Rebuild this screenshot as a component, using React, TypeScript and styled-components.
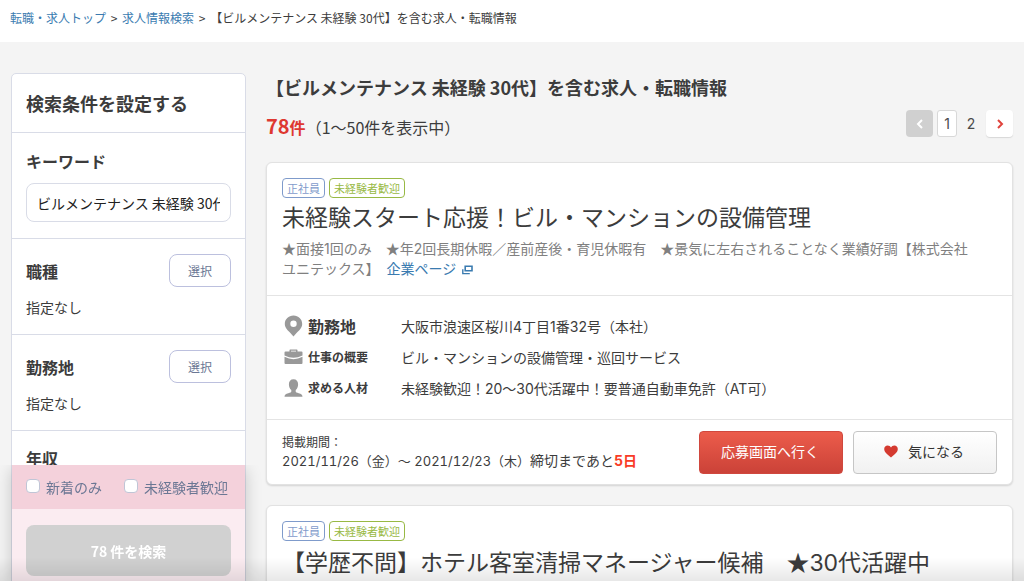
import React, { useState } from "react";
import styled, { createGlobalStyle } from "styled-components";

const sans = `"Noto Sans CJK JP", "Noto Sans", sans-serif`;
const cardSans = `"Inter", "Noto Sans CJK JP", sans-serif`;

const GlobalStyle = createGlobalStyle`
  *, *::before, *::after { box-sizing: border-box; }
  body { margin: 0; color: #3c3c3c; background: #f4f4f4; font-family: ${sans}; }
  h1, h2, h3, p, dl, dd, dt, ul, ol { margin: 0; padding: 0; }
  ul, ol { list-style: none; }
  button, input { font-family: inherit; }
  button { cursor: pointer; }
`;

const Page = styled.div`
  height: 100vh;
  overflow-y: auto;
  scrollbar-width: none;
`;

const Breadcrumb = styled.nav`
  height: 42px;
  padding: 9px 10px 0;
  background: #fff;
  font-size: 12px;
  line-height: 18px;
  white-space: nowrap;
`;

const Separator = styled.span`
  margin: 0 2px;
`;

const Link = styled.a`
  color: #3a7bb0;
  text-decoration: none;

  svg {
    margin-left: 2px;
    vertical-align: -1px;
  }
`;

const Columns = styled.div`
  display: flex;
  align-items: flex-start;
  gap: 20px;
  padding: 31px 11px 0;
`;

const Sidebar = styled.form`
  flex: 0 0 235px;
  background: #fff;
  border: 1px solid #d9dce7;
  border-radius: 5px;
`;

const SideTitle = styled.h2`
  height: 58px;
  padding: 0 14px;
  font-size: 18px;
  line-height: 58px;
`;

const Section = styled.section<{ $height: number }>`
  height: ${(p) => p.$height}px;
  padding: 15px 14px 0;
  border-top: 1px solid #d9dce7;
`;

const SectionHead = styled.div`
  display: flex;
  align-items: center;
  justify-content: space-between;
`;

const SectionTitle = styled.h3`
  font-size: 16px;
  line-height: 24px;
`;

const KeywordLabel = styled.label`
  display: block;
  font-size: 16px;
  font-weight: bold;
  line-height: 26px;
`;

const KeywordInput = styled.input`
  width: 100%;
  height: 39px;
  margin-top: 9px;
  padding: 0 10px;
  border: 1px solid #d9dce7;
  border-radius: 8px;
  background: #fff;
  color: #222;
  font-size: 14px;
`;

const SelectButton = styled.button`
  width: 62px;
  height: 33px;
  padding: 0 0 1px;
  border: 1px solid #bcc0de;
  border-radius: 8px;
  background: #fff;
  color: #6b7794;
  font-size: 12px;
`;

const Chosen = styled.p`
  margin-top: 9px;
  font-size: 14px;
  line-height: 22px;
`;

const SideFooter = styled.div`
  position: sticky;
  bottom: 0;
  background: #fbecf1;
  box-shadow: 0 4px 16px rgba(0, 0, 0, 0.2);
  clip-path: inset(0 -20px 0 -20px);
`;

const Checks = styled.div`
  display: flex;
  gap: 22px;
  height: 44px;
  padding: 0 14px;
  background: #f4d1db;
`;

const Check = styled.label`
  display: flex;
  align-items: center;
  gap: 6px;
  color: #6b7794;
  font-size: 14px;
  white-space: nowrap;

  input {
    appearance: none;
    flex: none;
    width: 14px;
    height: 14px;
    margin: 0 0 3px;
    border: 1px solid #c0c5d6;
    border-radius: 4px;
    background: #fff;
  }
  input:checked { background: #6b7794; }
`;

const SearchArea = styled.div`
  height: 72px;
  padding: 16px 14px 0;
`;

const SearchButton = styled.button`
  width: 100%;
  height: 51px;
  border: 0;
  border-radius: 8px;
  background: #d1d1d1;
  color: #fff;
  font-size: 14px;
  font-weight: bold;
`;

const Main = styled.main`
  flex: 1;
  min-width: 0;
`;

const Heading = styled.h1`
  font-size: 18px;
  line-height: 28px;
`;

const ResultBar = styled.div`
  display: flex;
  align-items: flex-start;
  justify-content: space-between;
  height: 61px;
`;

const Count = styled.p`
  padding-top: 10px;
  font-size: 16px;
  line-height: 30px;

  strong { color: #de3830; }
`;

const CountNumber = styled.span`
  font-size: 20px;
`;

const Pager = styled.nav`
  display: flex;
  align-items: center;
  gap: 4px;
  padding-top: 9px;
  font-family: ${cardSans};
  font-size: 14px;
`;

const PagerButton = styled.button<{ $muted?: boolean }>`
  display: flex;
  align-items: center;
  justify-content: center;
  width: 27px;
  height: 27px;
  padding: 0;
  border: 0;
  border-radius: 4px;
  background: ${(p) => (p.$muted ? "#d0d0d0" : "#fff")};
  color: ${(p) => (p.$muted ? "#fff" : "#e0433c")};
  box-shadow: ${(p) => (p.$muted ? "none" : "0 1px 1px #d8d8d8")};
`;

const PageNumber = styled.a<{ $current?: boolean }>`
  width: 20px;
  height: 27px;
  margin-right: ${(p) => (p.$current ? 0 : 1)}px;
  border: 1px solid ${(p) => (p.$current ? "#d8d8d8" : "transparent")};
  border-radius: 3px;
  background: ${(p) => (p.$current ? "#fff" : "transparent")};
  color: #4a4a4a;
  line-height: 26px;
  text-align: center;
  text-decoration: none;
`;

const Card = styled.article`
  margin-bottom: 20px;
  background: #fff;
  border: 1px solid #e2e2e2;
  border-radius: 6px;
  box-shadow: 0 1px 2px rgba(0, 0, 0, 0.14);
  font-family: ${cardSans};
`;

const CardHead = styled.header`
  padding: 15px 15px 16px;
`;

const Badges = styled.ul`
  display: flex;
  gap: 4px;
`;

const Badge = styled.li<{ $color: string }>`
  height: 20px;
  padding: 0 4px;
  border: 1px solid ${(p) => p.$color};
  border-radius: 4px;
  color: ${(p) => p.$color};
  font-family: ${sans};
  font-size: 11px;
  line-height: 18px;
`;

const JobTitle = styled.h2`
  font-size: 23px;
  font-weight: normal;
  line-height: 40px;
  white-space: nowrap;
`;

const Lead = styled.p`
  color: #808080;
  font-size: 14px;
  line-height: 20px;
`;

const Star = styled.span`
  font-family: ${sans};
`;

const Details = styled.dl`
  height: 124px;
  padding: 14px 15px 0;
  border-top: 1px solid #e4e4e4;
`;

const DetailRow = styled.div`
  display: flex;
  align-items: center;
  height: 31px;
`;

const Term = styled.dt<{ $large?: boolean }>`
  display: flex;
  align-items: center;
  gap: 5px;
  width: 119px;
  padding-left: 2px;
  font-size: ${(p) => (p.$large ? 16 : 12)}px;
  font-weight: bold;
`;

const Description = styled.dd`
  font-size: 14px;
`;

const CardFoot = styled.footer`
  display: flex;
  align-items: flex-start;
  justify-content: space-between;
  padding: 11px 15px 10px;
  border-top: 1px solid #e4e4e4;
`;

const Period = styled.p`
  padding-top: 3px;
  font-size: 12px;
  line-height: 18px;
`;

const Dates = styled.span`
  font-size: 13px;
  font-variant-numeric: tabular-nums;
`;

const Deadline = styled.span`
  font-size: 14px;

  strong { color: #f93c26; }
`;

const Actions = styled.div`
  display: flex;
  gap: 10px;
`;

const ActionButton = styled.button<{ $primary?: boolean }>`
  display: flex;
  align-items: center;
  justify-content: center;
  gap: 10px;
  width: 144px;
  height: 43px;
  padding: 0 2px 4px 0;
  border: 1px solid ${(p) => (p.$primary ? "#d0483e" : "#c6c6c6")};
  border-radius: 4px;
  background: ${(p) =>
    p.$primary
      ? "linear-gradient(#ec5c4b, #cb4238)"
      : "linear-gradient(#ffffff, #f1f1f1)"};
  color: ${(p) => (p.$primary ? "#fff" : "#333")};
  font-size: 14px;
`;

const BottomShade = styled.div`
  position: fixed;
  right: 0;
  bottom: 0;
  left: 0;
  height: 24px;
  background: linear-gradient(rgba(0, 0, 0, 0), rgba(0, 0, 0, 0.09));
  pointer-events: none;
`;

const Chevron = ({ left }: { left?: boolean }) => (
  <svg width="10" height="12" viewBox="0 0 10 12" fill="none" stroke="currentColor" strokeWidth="2" aria-hidden="true">
    <path d={left ? "M7 2 3 6l4 4" : "M3 2l4 4-4 4"} />
  </svg>
);

const WindowIcon = () => (
  <svg width="11" height="10" viewBox="0 0 11 10" fill="none" stroke="currentColor" aria-hidden="true">
    <path d="M3.200 1.200h6.800v4.600H3.200z" strokeWidth="1.600" />
    <path d="M.8 4.200v4.400h7" strokeWidth="1.400" />
  </svg>
);

const PinIcon = () => (
  <svg width="19" height="22" viewBox="0 0 19 22" fill="#999" aria-hidden="true">
    <path fillRule="evenodd" d="M9.500 .5C4.600 .5.800 4.200.800 8.900c0 5 4.700 7.300 8.700 12.600 4-5.300 8.700-7.600 8.700-12.600C18.200 4.200 14.400.5 9.500.5zm0 5a3.200 3.200 0 1 1 0 6.400 3.200 3.200 0 0 1 0-6.400z" />
  </svg>
);

const CaseIcon = () => (
  <svg width="19" height="16" viewBox="0 0 19 16" fill="#999" aria-hidden="true">
    <path fillRule="evenodd" d="M5.500 2.500V1.200Q5.500.5 6.200.5h6.600q.7 0 .7.700v1.300h4q1 0 1 1V6.500Q14 8.800 9.500 8.800T.5 6.500V3.500q0-1 1-1zM7 2.500h5V1.700H7z" />
    <path d="M.5 7.800Q5 10.200 9.500 10.200t9-2.400V14q0 1-1 1h-16q-1 0-1-1z" />
  </svg>
);

const PersonIcon = () => (
  <svg width="19" height="18" viewBox="0 0 19 18" fill="#999" aria-hidden="true">
    <path d="M9.500.3c3 0 4.600 2 4.600 5 0 2.300-.8 4.500-2.400 5.700v1.600c0 .8 1 1.200 3 1.700 2.500.7 3.800 1.400 3.800 3.400H.5c0-2 1.300-2.700 3.800-3.400 2-.5 3-.9 3-1.700V11C5.700 9.800 4.900 7.600 4.900 5.300c0-3 1.600-5 4.600-5z" />
  </svg>
);

const HeartIcon = () => (
  <svg width="14" height="15" viewBox="0 -2 14 15" fill="#d43a30" aria-hidden="true">
    <path d="M7 12.500C4 9.800.2 7.500.2 4 .2 1.800 1.800.4 3.600.4 5.200.4 6.400 1.200 7 2.500 7.600 1.200 8.800.4 10.400.4c1.800 0 3.400 1.400 3.400 3.600 0 3.500-3.800 5.800-6.800 8.500z" />
  </svg>
);

const JobBadges = () => (
  <Badges>
    <Badge $color="#7f9bcb">正社員</Badge>
    <Badge $color="#98b944">未経験者歓迎</Badge>
  </Badges>
);

const App = () => {
  const [keyword, setKeyword] = useState("ビルメンテナンス 未経験 30代");

  return (
    <Page>
      <GlobalStyle />
      <Breadcrumb aria-label="パンくず">
        <Link href="#top">転職・求人トップ</Link> <Separator>&gt;</Separator> <Link href="#search">求人情報検索</Link> <Separator>&gt;</Separator> 【ビルメンテナンス 未経験 30代】を含む求人・転職情報
      </Breadcrumb>
      <Columns>
        <Sidebar onSubmit={(e) => e.preventDefault()}>
          <SideTitle>検索条件を設定する</SideTitle>
          <Section $height={106}>
            <KeywordLabel htmlFor="keyword">キーワード</KeywordLabel>
            <KeywordInput id="keyword" value={keyword} onChange={(e) => setKeyword(e.target.value)} />
          </Section>
          {["職種", "勤務地"].map((name) => (
            <Section $height={96} key={name}>
              <SectionHead>
                <SectionTitle>{name}</SectionTitle>
                <SelectButton type="button">選択</SelectButton>
              </SectionHead>
              <Chosen>指定なし</Chosen>
            </Section>
          ))}
          <Section $height={160}>
            <SectionTitle>年収</SectionTitle>
          </Section>
          <SideFooter>
            <Checks>
              <Check><input type="checkbox" />新着のみ</Check>
              <Check><input type="checkbox" />未経験者歓迎</Check>
            </Checks>
            <SearchArea>
              <SearchButton type="submit">78 件を検索</SearchButton>
            </SearchArea>
          </SideFooter>
        </Sidebar>
        <Main>
          <Heading>【ビルメンテナンス 未経験 30代】を含む求人・転職情報</Heading>
          <ResultBar>
            <Count>
              <strong><CountNumber>78</CountNumber>件</strong>（1〜50件を表示中）
            </Count>
            <Pager aria-label="ページ">
              <PagerButton $muted type="button" aria-label="前へ"><Chevron left /></PagerButton>
              <PageNumber $current href="#1">1</PageNumber>
              <PageNumber href="#2">2</PageNumber>
              <PagerButton type="button" aria-label="次へ"><Chevron /></PagerButton>
            </Pager>
          </ResultBar>
          <Card>
            <CardHead>
              <JobBadges />
              <JobTitle>未経験スタート応援！ビル・マンションの設備管理</JobTitle>
              <Lead>
                <Star>★</Star>面接1回のみ　<Star>★</Star>年2回長期休暇／産前産後・育児休暇有　<Star>★</Star>景気に左右されることなく業績好調【株式会社<br />
                ユニテックス】　<Link href="#company">企業ページ <WindowIcon /></Link>
              </Lead>
            </CardHead>
            <Details>
              <DetailRow>
                <Term $large><PinIcon />勤務地</Term>
                <Description>大阪市浪速区桜川4丁目1番32号（本社）</Description>
              </DetailRow>
              <DetailRow>
                <Term><CaseIcon />仕事の概要</Term>
                <Description>ビル・マンションの設備管理・巡回サービス</Description>
              </DetailRow>
              <DetailRow>
                <Term><PersonIcon />求める人材</Term>
                <Description>未経験歓迎！20〜30代活躍中！要普通自動車免許（AT可）</Description>
              </DetailRow>
            </Details>
            <CardFoot>
              <Period>
                掲載期間：<br />
                <Dates>2021/11/26（金）〜 2021/12/23（木）</Dates>
                <Deadline>締切まであと<strong>5日</strong></Deadline>
              </Period>
              <Actions>
                <ActionButton $primary type="button">応募画面へ行く</ActionButton>
                <ActionButton type="button"><HeartIcon />気になる</ActionButton>
              </Actions>
            </CardFoot>
          </Card>
          <Card>
            <CardHead>
              <JobBadges />
              <JobTitle>【学歴不問】ホテル客室清掃マネージャー候補　<Star>★</Star>30代活躍中</JobTitle>
            </CardHead>
          </Card>
        </Main>
      </Columns>
      <BottomShade />
    </Page>
  );
};

export default App;
